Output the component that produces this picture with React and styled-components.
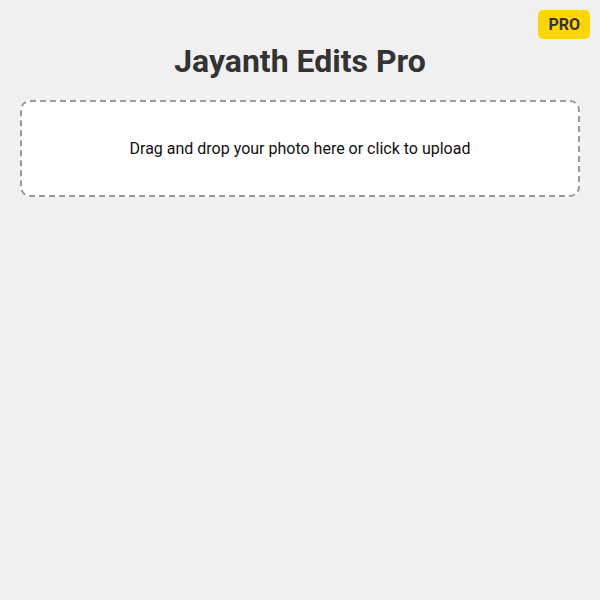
import React from "react";
import styled, { createGlobalStyle } from "styled-components";

const GlobalStyle = createGlobalStyle`
  html, body {
    margin: 0;
    padding: 0;
    background: #f0f0f0;
    font-family: Roboto, "Liberation Sans", sans-serif;
    color: #333;
  }
`;

const Page = styled.div`
  position: relative;
  min-height: 600px;
  padding: 42px 20px;
  box-sizing: border-box;
`;

const ProBadge = styled.div`
  position: absolute;
  top: 10px;
  right: 10px;
  background: #ffd700;
  color: #333;
  font-weight: 700;
  font-size: 16px;
  padding: 5px 10px;
  border-radius: 5px;
`;

const Title = styled.h1`
  margin: 0 0 20px;
  text-align: center;
  font-size: 32px;
  font-weight: 700;
  color: #333;
`;

const DropZone = styled.div`
  background: #fff;
  border: 2px dashed #999;
  border-radius: 10px;
  padding: 37px 20px;
  text-align: center;
  font-size: 16px;
  color: #111;
  cursor: pointer;
`;

export default function App() {
  return (
    <>
      <GlobalStyle />
      <Page>
        <ProBadge>PRO</ProBadge>
        <Title>Jayanth Edits Pro</Title>
        <DropZone>Drag and drop your photo here or click to upload</DropZone>
      </Page>
    </>
  );
}
